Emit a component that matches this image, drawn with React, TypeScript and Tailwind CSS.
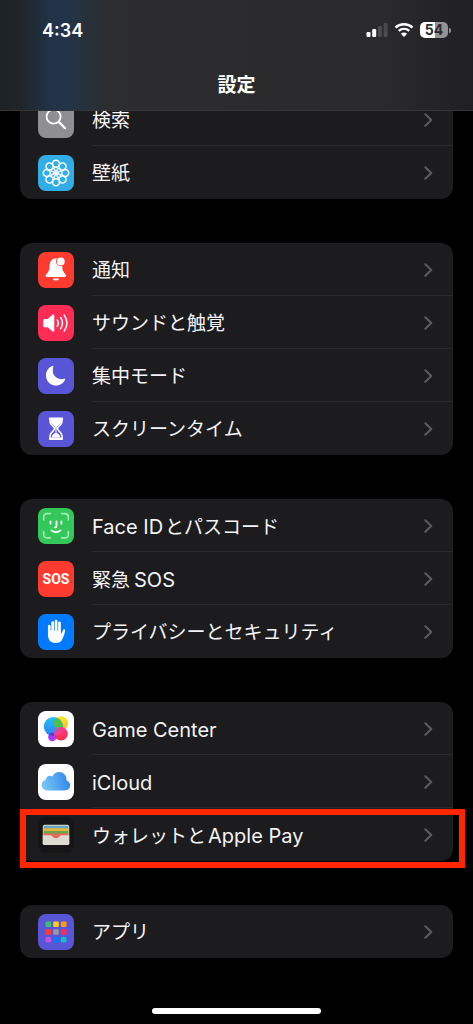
import React from "react";

type Item = {
  id: string;
  label: React.ReactNode;
  tile: string;
  icon: React.ReactNode;
  highlighted?: boolean;
};

const Latin = ({ children, className = "" }: { children: React.ReactNode; className?: string }) => (
  <span className={`text-[20px] ${className}`}>{children}</span>
);

const Glyph = ({ children }: { children: React.ReactNode }) => (
  <svg viewBox="0 0 36 36" className="size-9" fill="none" aria-hidden="true">
    {children}
  </svg>
);

const angles = [0, 45, 90, 135, 180, 225, 270, 315];

const SearchIcon = () => (
  <Glyph>
    <circle cx="15.6" cy="14.6" r="7" stroke="#fff" strokeWidth="1.8" />
    <path d="M20.8 19.9l6.3 6.3" stroke="#fff" strokeWidth="2.2" strokeLinecap="round" />
  </Glyph>
);

const WallpaperIcon = () => (
  <Glyph>
    {angles.map((a) => (
      <g key={a} transform={`rotate(${a} 18 18)`} stroke="#fff">
        <circle cx="18" cy="8.8" r="3.5" strokeWidth="1.5" />
        <path d="M18 17.5c-2.6-2.6-1.8-5 0-5.2 1.8.2 2.6 2.6 0 5.2z" strokeWidth="1" />
      </g>
    ))}
    <circle cx="18" cy="18" r="1.8" fill="#fff" />
  </Glyph>
);

const BellIcon = () => (
  <Glyph>
    <path
      d="M17.8 6.2c-4.1.4-6 3.400-6.200 7.400-.2 4.600-1 6.300-3 8.400-.7.8-1 1.200-1 1.800 0 .8.6 1.200 1.500 1.200h17.600c.9 0 1.500-.4 1.500-1.200 0-.6-.3-1-1-1.800-2-2.100-2.800-3.800-3-8.400-.3-4-2.200-7-6.400-7.400z"
      fill="#fff"
    />
    <path d="M14.6 26.400h6.600c-.4 1.300-1.700 2.200-3.300 2.200s-2.900-.9-3.300-2.200z" fill="#fff" />
    <circle cx="22.8" cy="9.400" r="4.800" fill="#ff3b30" />
    <circle cx="22.8" cy="9.400" r="3.900" fill="#fff" />
  </Glyph>
);

const SoundIcon = () => (
  <Glyph>
    <path
      d="M5.2 15.800c0-1.200.6-1.800 1.800-1.800h2.800l4.400-4c.9-.8 2.100-.4 2.100.8v14.600c0 1.200-1.200 1.600-2.100.8l-4.400-4H7c-1.200 0-1.800-.6-1.800-1.800z"
      fill="#fff"
    />
    <path
      d="M19.2 14.900c1.300 1.900 1.300 4.500 0 6.400M22.600 12.500c2.300 3.400 2.300 7.800 0 11.200M26.200 10.100c3.400 4.900 3.400 11.100 0 16"
      stroke="#fff"
      strokeWidth="1.5"
      strokeLinecap="round"
    />
  </Glyph>
);

const MoonIcon = () => (
  <Glyph>
    <path
      d="M14.600 7.800c.5-.2 1 .3.8.8-2.700 7.600 3.100 14.400 10.900 12.200.6-.2 1 .3.800.8-1.400 3.600-4.800 6-8.900 6-5.700 0-10.200-4.400-10.200-10.100 0-4.300 2.600-8.100 6.600-9.700z"
      fill="#fff"
    />
  </Glyph>
);

const HourglassIcon = () => (
  <Glyph>
    <path d="M12 7.700h12M12 27.700h12" stroke="#fff" strokeWidth="2.400" strokeLinecap="round" />
    <path
      d="M12 8v2.500c0 3.600 4.600 4.800 4.600 7.100S12 21.200 12 24.800v2.800M24 8v2.500c0 3.600-4.600 4.800-4.600 7.100s4.600 3.600 4.600 7.200v2.800"
      stroke="#fff"
      strokeWidth="1.600"
    />
    <path d="M12.500 9h11v2c-.8 2.200-4.900 3.600-4.900 6.400h-1.200c0-2.800-4.100-4.200-4.900-6.400z" fill="#fff" />
    <path d="M17.500 17h1v5c1.800.6 3.400 2 3.900 4.500h-8.800c.5-2.500 2.100-3.900 3.900-4.500z" fill="#fff" />
  </Glyph>
);

const FaceIdIcon = () => (
  <Glyph>
    <path
      d="M5.700 12V9c0-2.200 1.200-3.400 3.400-3.400h3.200M23.700 5.600h3.200c2.200 0 3.400 1.200 3.400 3.400v3M30.300 23.500v3c0 2.200-1.200 3.400-3.400 3.400h-3.200M12.300 29.900H9.100c-2.200 0-3.400-1.200-3.400-3.400v-3"
      stroke="#a6edb6"
      strokeWidth="1.600"
      strokeLinecap="round"
    />
    <path
      d="M12.500 13.300v2.400M23.400 13.300v2.400M18.500 13.300v5c0 .8-.4 1.200-1.400 1.200M13.500 22.400c2.500 2.300 6.500 2.300 9 0"
      stroke="#fff"
      strokeWidth="1.800"
      strokeLinecap="round"
    />
  </Glyph>
);

const HandIcon = () => (
  <Glyph>
    <path
      d="M11.300 12v9M14.700 8.600v11M18.100 7.200v12M21.500 8.800v11"
      stroke="#fff"
      strokeWidth="2.700"
      strokeLinecap="round"
    />
    <path
      d="M10 16.500h12.800v4c1-1.400 1.700-3.300 2.200-4.500.4-1.100 2.200-.8 2.100.6-.2 2.200-1.200 5.100-2.300 7.600-1.400 3.300-3.700 4.900-7.100 4.900-4.900 0-7.700-3-7.700-8z"
      fill="#fff"
    />
  </Glyph>
);

const GameCenterIcon = () => (
  <Glyph>
    <defs>
      <linearGradient id="gc-blue" x1="0" y1="0" x2="0" y2="1">
        <stop stopColor="#22c3f3" />
        <stop offset="1" stopColor="#2f7df6" />
      </linearGradient>
      <linearGradient id="gc-yellow" x1="0" y1="0" x2="0" y2="1">
        <stop stopColor="#ffe52e" />
        <stop offset="1" stopColor="#f7b52a" />
      </linearGradient>
      <linearGradient id="gc-red" x1="0" y1="0" x2="0" y2="1">
        <stop stopColor="#ff3b86" />
        <stop offset="1" stopColor="#ff2d4f" />
      </linearGradient>
      <clipPath id="gc-clip">
        <circle cx="15.300" cy="15.500" r="9.500" />
      </clipPath>
    </defs>
    <circle cx="14.300" cy="26" r="4.200" fill="#a63bf5" />
    <circle cx="23" cy="12.300" r="7" fill="url(#gc-yellow)" />
    <circle cx="15.300" cy="15.500" r="9.500" fill="url(#gc-blue)" />
    <circle cx="23" cy="12.300" r="7" fill="#4cc04a" clipPath="url(#gc-clip)" />
    <circle cx="14.300" cy="26" r="4.200" fill="#5a35e8" clipPath="url(#gc-clip)" />
    <circle cx="23" cy="22.800" r="6.800" fill="url(#gc-red)" />
    <circle cx="23" cy="22.800" r="6.800" fill="#e2469b" clipPath="url(#gc-clip)" />
  </Glyph>
);

const CloudIcon = () => (
  <Glyph>
    <defs>
      <linearGradient id="cloud-fill" x1="0" y1="0.600" x2="1" y2="0.400">
        <stop stopColor="#79c7f5" />
        <stop offset="1" stopColor="#2f86ec" />
      </linearGradient>
    </defs>
    <path
      d="M9.500 26.500c-3.400 0-5.900-2.400-5.900-5.500 0-2.700 1.700-4.800 4.200-5.300.2-2.500 2-4 4.200-4 .9 0 1.700.2 2.400.7 1.300-2.600 3.700-4.300 6.600-4.300 4.300 0 7.500 3.300 7.500 7.600v.8c2.100.7 3.600 2.500 3.600 4.800 0 3-2.300 5.200-5.300 5.200z"
      fill="url(#cloud-fill)"
    />
  </Glyph>
);

const WalletIcon = () => (
  <Glyph>
    <defs>
      <clipPath id="wallet-clip">
        <rect x="4.800" y="7.800" width="26.400" height="20.300" rx="1.800" />
      </clipPath>
    </defs>
    <g clipPath="url(#wallet-clip)">
      <path fill="#dedbd0" d="M4 7h28v22H4z" />
      <path fill="#63a5c4" d="M5.500 8.700h25v3h-25z" />
      <path fill="#e2b53c" d="M5.500 11.300h25v3h-25z" />
      <path fill="#6fa548" d="M5.500 13.900h25v3h-25z" />
      <path fill="#e9695a" d="M5.500 16.500h25v5h-25z" />
      <path
        fill="#dedbd0"
        d="M4 18.200h7.800c1.600 0 2 .5 2.700 1.300 1 1.100 2 1.800 3.500 1.800s2.500-.7 3.500-1.800c.7-.8 1.100-1.300 2.700-1.300H32V29H4z"
      />
    </g>
  </Glyph>
);

const appColors = [
  "#3fbf72", "#ffcc1a", "#ff9d0a",
  "#ff3b30", "#9a9aa2", "#ff2d55",
  "#bf52e0", "#0a7aff", "#14bfc4",
];

const AppsIcon = () => (
  <Glyph>
    {appColors.map((c, i) => (
      <rect
        key={c}
        x={7.5 + (i % 3) * 7.7}
        y={7.5 + Math.floor(i / 3) * 7.7}
        width="5.600"
        height="5.600"
        rx="1"
        fill={c}
      />
    ))}
  </Glyph>
);

const SosIcon = () => (
  <span aria-hidden="true" className="font-['Roboto',sans-serif] text-[14px] font-bold leading-none text-white">
    SOS
  </span>
);

const groups: Item[][] = [
  [
    { id: "search", label: "検索", tile: "bg-[#8e8e93]", icon: <SearchIcon /> },
    { id: "wallpaper", label: "壁紙", tile: "bg-[#32ade6]", icon: <WallpaperIcon /> },
  ],
  [
    { id: "notifications", label: "通知", tile: "bg-[#ff3b30]", icon: <BellIcon /> },
    { id: "sounds", label: "サウンドと触覚", tile: "bg-[#ff2d55]", icon: <SoundIcon /> },
    { id: "focus", label: "集中モード", tile: "bg-[#5856d6]", icon: <MoonIcon /> },
    { id: "screen-time", label: "スクリーンタイム", tile: "bg-[#5856d6]", icon: <HourglassIcon /> },
  ],
  [
    {
      id: "face-id",
      label: (
        <>
          <Latin className="mr-0.5">Face ID</Latin>とパスコード
        </>
      ),
      tile: "bg-[#34c759]",
      icon: <FaceIdIcon />,
    },
    {
      id: "sos",
      label: (
        <>
          緊急<Latin className="ml-1">SOS</Latin>
        </>
      ),
      tile: "bg-[#ff3b30]",
      icon: <SosIcon />,
    },
    { id: "privacy", label: "プライバシーとセキュリティ", tile: "bg-[#007aff]", icon: <HandIcon /> },
  ],
  [
    { id: "game-center", label: <Latin>Game Center</Latin>, tile: "bg-white", icon: <GameCenterIcon /> },
    { id: "icloud", label: <Latin>iCloud</Latin>, tile: "bg-white", icon: <CloudIcon /> },
    {
      id: "wallet",
      label: (
        <>
          ウォレットと<Latin className="ml-0.5">Apple Pay</Latin>
        </>
      ),
      tile: "bg-[#161617]",
      icon: <WalletIcon />,
      highlighted: true,
    },
  ],
  [{ id: "apps", label: "アプリ", tile: "bg-[#5856d6]", icon: <AppsIcon /> }],
];

const Chevron = () => (
  <svg viewBox="0 0 9 14" className="h-3.5 w-[9px] shrink-0" fill="none" aria-hidden="true">
    <path d="M1.300 1.200L7.300 7l-6 5.800" stroke="#5c5c60" strokeWidth="2" strokeLinecap="round" strokeLinejoin="round" />
  </svg>
);

const Row = ({ item, last }: { item: Item; last: boolean }) => (
  <li className="relative">
    <a href={`#${item.id}`} className="flex h-[53px] gap-[18px] pl-[18px]">
      <span className={`flex size-9 shrink-0 items-center justify-center self-center overflow-hidden rounded-lg ${item.tile}`}>
        {item.icon}
      </span>
      <span
        className={`flex flex-1 items-center justify-between border-b pr-5 pt-0.5 ${last ? "border-transparent" : "border-[#29292c]"}`}
      >
        <span className="whitespace-nowrap pt-0.5 leading-7">{item.label}</span>
        <Chevron />
      </span>
    </a>
    {item.highlighted && (
      <span className="pointer-events-none absolute -bottom-[7px] -right-3 left-0 top-px z-10 border-6 border-[#ff2600]" />
    )}
  </li>
);

const StatusIcons = () => (
  <div className="flex items-center gap-1.5">
    <svg viewBox="0 0 22 16" className="h-4 w-[22px]" aria-label="電波">
      <rect x="0.500" y="10" width="4" height="5" rx="1.200" fill="#fff" />
      <rect x="6.200" y="7" width="4" height="8" rx="1.200" fill="#fff" />
      <rect x="11.900" y="4" width="4" height="11" rx="1.200" fill="#4b4b4d" />
      <rect x="17.600" y="1" width="4" height="14" rx="1.200" fill="#4b4b4d" />
    </svg>
    <svg viewBox="0 0 20 16" className="h-4 w-5" fill="none" aria-label="Wi-Fi">
      <path d="M1.400 5.500c4.900-4.500 12.300-4.500 17.200 0" stroke="#fff" strokeWidth="2.500" />
      <path d="M4.700 8.900c3.100-2.700 7.500-2.700 10.600 0" stroke="#fff" strokeWidth="2.400" />
      <path d="M6.900 11.800c1.800-1.600 4.400-1.600 6.200 0L10 15z" fill="#fff" />
    </svg>
    <div className="flex items-center gap-px">
      <div className="flex h-4 w-7 items-center justify-center rounded-[5px] bg-linear-to-r from-white from-54% to-[#939395] to-54% text-[14px] font-bold leading-none text-[#2b2b2d]">
        54
      </div>
      <span className="h-[5px] w-0.5 rounded-r-full bg-[#939395]" />
    </div>
  </div>
);

export default function App() {
  return (
    <div className="flex min-h-screen flex-col bg-black font-['Inter','Noto_Sans_CJK_JP',sans-serif] text-[19px] text-[#f4f4f6]">
      <header className="sticky top-0 z-20 border-b border-[#363638] bg-[#2b2b2d] bg-[linear-gradient(to_right,#1e2124_0%,#20262c_5%,#22334a_11%,#23344a_14%,#27313b_18%,#2b2d2f_23%,#2c2c2e_30%,#2b2b2d_80%,#202022_100%)] text-white">
        <div className="flex h-[60px] items-center justify-between pl-[42px] pr-[22px]">
          <time className="text-[18px] font-semibold">4:34</time>
          <StatusIcons />
        </div>
        <h1 className="flex h-[50px] items-center justify-center pt-0.5 text-[19px] font-bold">設定</h1>
      </header>
      <main className="-mt-[18px] flex flex-col gap-11 px-5">
        {groups.map((items, g) => (
          <ul key={items[0].id} className={`bg-[#1c1c1e] ${g === 0 ? "rounded-b-xl" : "rounded-xl"}`}>
            {items.map((item, i) => (
              <Row key={item.id} item={item} last={i === items.length - 1} />
            ))}
          </ul>
        ))}
      </main>
      <footer className="mt-auto flex justify-center pb-2.5 pt-6">
        <span className="h-1.5 w-[169px] rounded-full bg-white" />
      </footer>
    </div>
  );
}
